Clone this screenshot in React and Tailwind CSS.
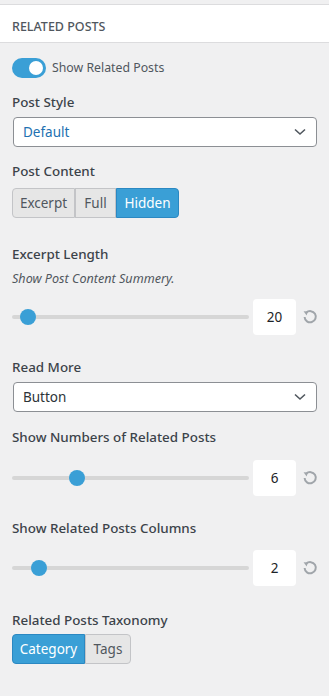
import React from "react";

const font = { fontFamily: '"Noto Sans", "Open Sans", sans-serif' };

function Label({ children, className = "" }) {
  return (
    <div className={"text-[13.4px] leading-[20px] font-medium text-[#3c434a] " + className}>{children}</div>
  );
}

function Select({ value, blue }) {
  return (
    <div className="mx-[1px] flex h-[30px] items-center justify-between rounded-[4px] border border-[#8c8f94] bg-white pl-[9px] pr-[10px]">
      <span className={"text-[13.5px] " + (blue ? "text-[#2271b1]" : "text-[#2c3338]")}>{value}</span>
      <svg width="12" height="8" viewBox="0 0 12 8" fill="none">
        <path d="M1 1.5 L6 6 L11 1.5" stroke="#50575e" strokeWidth="1.6" />
      </svg>
    </div>
  );
}

function Slider({ pct, value }) {
  return (
    <div className="flex items-center">
      <div className="relative h-[4px] w-[237px] rounded-full bg-[#d6d6d6]">
        <div
          className="absolute top-1/2 h-[16px] w-[16px] -translate-x-1/2 -translate-y-1/2 rounded-full bg-[#3a9fd6]"
          style={{ left: pct + "px" }}
        />
      </div>
      <div className="ml-[4px] flex h-[36px] w-[43px] items-center justify-center rounded-[4px] bg-white text-[13.5px] text-[#1d2327]">
        {value}
      </div>
      <svg className="ml-[6px]" width="16" height="16" viewBox="0 0 16 16" fill="none">
        <path d="M4.2 3.8 A5.6 5.6 0 1 1 2.6 8" stroke="#a0a5aa" strokeWidth="2" fill="none" />
        <path d="M1.6 2.2 L5.8 2.4 L4.6 6.4 Z" fill="#a0a5aa" />
      </svg>
    </div>
  );
}

function Group({ items, active }) {
  return (
    <div className="flex">
      {items.map((it, i) => (
        <div
          key={it.t}
          className={
            "flex h-[30px] items-center justify-center border text-[13.5px] " +
            (i === 0 ? "rounded-l-[4px] " : "") +
            (i === items.length - 1 ? "rounded-r-[4px] " : "") +
            (i === active
              ? "border-[#2b88c2] bg-[#3a9fd6] text-white"
              : "border-[#c3c4c7] bg-[#e6e6e6] text-[#50575e]")
          }
          style={{ width: it.w }}
        >
          {it.t}
        </div>
      ))}
    </div>
  );
}

export default function App() {
  return (
    <div className="min-h-[696px] w-[329px] bg-[#f0f0f1]" style={font}>
      <div className="h-[5px] border-b border-[#dcdcde]" />
      <div className="flex h-[38px] items-center border-b border-[#dcdcde] bg-white px-[12px] pt-[7px] text-[12.5px] font-medium uppercase text-[#50575e]">
        Related Posts
      </div>
      <div className="px-[12px] pr-[11px]">
        <div className="mt-[15px] flex items-center">
          <div className="flex h-[20px] w-[34px] items-center justify-end rounded-full bg-[#3a9fd6] pr-[3px]">
            <div className="h-[14px] w-[14px] rounded-full bg-white" />
          </div>
          <span className="ml-[6px] text-[12.3px] text-[#50575e]">Show Related Posts</span>
        </div>

        <Label className="mt-[14px]">Post Style</Label>
        <div className="mt-[5px]">
          <Select value="Default" blue />
        </div>

        <Label className="mt-[14px]">Post Content</Label>
        <div className="mt-[7px]">
          <Group
            items={[
              { t: "Excerpt", w: 63 },
              { t: "Full", w: 41 },
              { t: "Hidden", w: 63 },
            ]}
            active={2}
          />
        </div>

        <Label className="mt-[26px]">Excerpt Length</Label>
        <div className="mt-[5px] text-[12.6px] italic leading-[20px] text-[#50575e]">Show Post Content Summery.</div>
        <div className="mt-[10px]">
          <Slider pct={16} value="20" />
        </div>

        <Label className="mt-[22px]">Read More</Label>
        <div className="mt-[5px]">
          <Select value="Button" />
        </div>

        <Label className="mt-[15px]">Show Numbers of Related Posts</Label>
        <div className="mt-[13px]">
          <Slider pct={65} value="6" />
        </div>

        <Label className="mt-[22px]">Show Related Posts Columns</Label>
        <div className="mt-[12px]">
          <Slider pct={27} value="2" />
        </div>

        <Label className="mt-[24px]">Related Posts Taxonomy</Label>
        <div className="mt-[4px]">
          <Group
            items={[
              { t: "Category", w: 73 },
              { t: "Tags", w: 46 },
            ]}
            active={0}
          />
        </div>
      </div>
    </div>
  );
}
